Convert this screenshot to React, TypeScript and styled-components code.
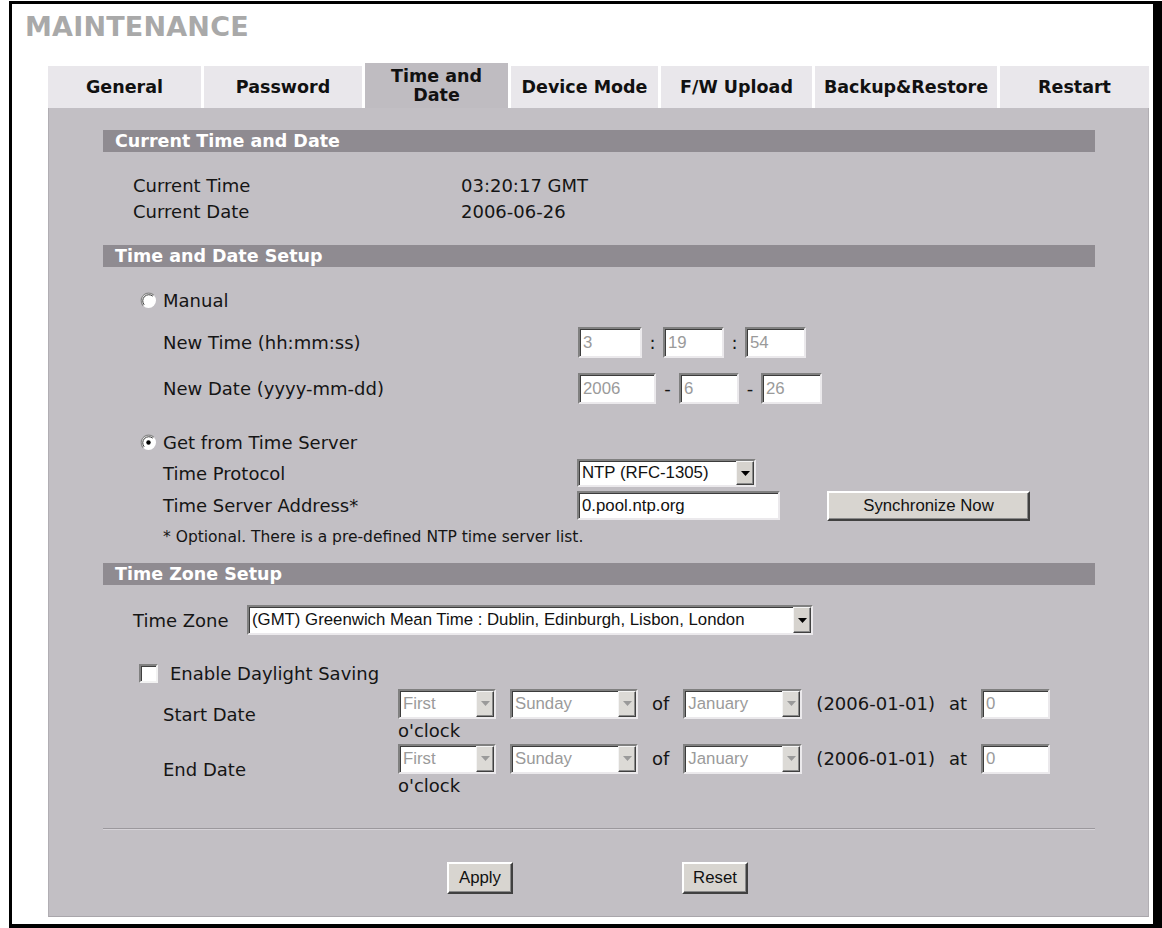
import React from "react";
import styled, { createGlobalStyle } from "styled-components";

const GlobalStyle = createGlobalStyle`
  html, body { margin: 0; padding: 0; background: #ffffff; }
  body {
    font-family: "DejaVu Sans", Verdana, sans-serif;
    font-size: 18px;
    color: #151515;
  }
  * { box-sizing: border-box; }
`;

const Frame = styled.div`
  margin: 1px 0 0 9px;
  width: 1153px;
  height: 927px;
  border: solid #000;
  border-width: 3px 9px 4px 3px;
  background: #fff;
  display: flex;
  flex-direction: column;
`;

const Title = styled.h1`
  margin: 0;
  padding: 7px 0 0 13px;
  font-size: 27px;
  line-height: 32px;
  font-weight: bold;
  color: #a9a9a9;
  letter-spacing: 0.2px;
`;

const TabBar = styled.div`
  display: flex;
  align-items: flex-end;
  gap: 3px;
  margin: 20px 0 0 36px;
  height: 45px;
`;

const Tab = styled.div<{ $w: number; $active?: boolean }>`
  width: ${(p) => p.$w}px;
  height: ${(p) => (p.$active ? 45 : 42)}px;
  display: flex;
  align-items: center;
  justify-content: center;
  text-align: center;
  font-weight: bold;
  font-size: 17.5px;
  line-height: 19px;
  color: #111;
  background: ${(p) => (p.$active ? "#bfbcc1" : "#e9e7eb")};
`;

const Panel = styled.div`
  margin-left: 36px;
  width: 1101px;
  height: 809px;
  background: #c2bfc4;
  border-left: 1px solid #b1aeb3;
  border-right: 1px solid #b1aeb3;
  border-bottom: 1px solid #a9a6ab;
  padding: 0 53px 0 54px;
  display: flex;
  flex-direction: column;
`;

const SectionHeader = styled.div<{ $mt: number }>`
  margin-top: ${(p) => p.$mt}px;
  height: 22px;
  background: #8f8b91;
  color: #fff;
  font-weight: bold;
  font-size: 17.5px;
  line-height: 22px;
  padding-left: 12px;
`;

const Row = styled.div<{ $mt?: number; $h: number; $indent: number }>`
  margin-top: ${(p) => p.$mt ?? 0}px;
  height: ${(p) => p.$h}px;
  padding-left: ${(p) => p.$indent}px;
  display: flex;
  align-items: center;
  white-space: nowrap;
`;

const Label = styled.span<{ $w: number }>`
  width: ${(p) => p.$w}px;
  flex: none;
`;

const Note = styled.span`
  font-size: 15.5px;
`;

const Field = styled.div<{ $w: number; $h?: number; $muted?: boolean }>`
  width: ${(p) => p.$w}px;
  height: ${(p) => p.$h ?? 30}px;
  flex: none;
  display: flex;
  align-items: center;
  background: #fff;
  border-style: solid;
  border-width: 2px;
  border-color: #808080 #ebe9ec #ebe9ec #808080;
  box-shadow: inset 1px 1px 0 #3c3c3c;
  padding-left: 3px;
  font-family: "Liberation Sans", Arial, sans-serif;
  font-size: 16.8px;
  color: ${(p) => (p.$muted ? "#9a9a9a" : "#111")};
  overflow: hidden;
`;

const SelectBox = styled(Field)`
  padding-right: 0;
`;

const SelectText = styled.span`
  flex: 1;
  overflow: hidden;
  white-space: nowrap;
`;

const ArrowButton = styled.span<{ $muted?: boolean }>`
  flex: none;
  width: 18px;
  height: 100%;
  display: flex;
  align-items: center;
  justify-content: center;
  background: ${(p) => (p.$muted ? "#dcdad6" : "#d6d3ce")};
  border-style: solid;
  border-width: 1px;
  border-color: #f4f4f4 #404040 #404040 #f4f4f4;
  box-shadow: inset -1px -1px 0 #8a8a8a;
`;

const Sep = styled.span<{ $w: number }>`
  width: ${(p) => p.$w}px;
  flex: none;
  text-align: center;
`;

const Button3D = styled.button<{ $w: number; $h?: number }>`
  width: ${(p) => p.$w}px;
  height: ${(p) => p.$h ?? 30}px;
  flex: none;
  padding: 0;
  background: #d8d5d0;
  border-style: solid;
  border-width: 2px;
  border-color: #ffffff #404040 #404040 #ffffff;
  box-shadow: inset -1px -1px 0 #8a8a8a;
  font-family: "Liberation Sans", Arial, sans-serif;
  font-size: 16.8px;
  color: #111;
`;

const CheckBox = styled.span`
  width: 19px;
  height: 19px;
  flex: none;
  margin-right: 12px;
  background: #fff;
  border-style: solid;
  border-width: 2px;
  border-color: #808080 #f2f2f2 #f2f2f2 #808080;
  box-shadow: inset 1px 1px 0 #404040;
`;

const RadioWrap = styled.span`
  width: 17px;
  height: 17px;
  flex: none;
  margin-right: 6px;
  display: inline-flex;
`;

const DstRow = styled.div<{ $mt?: number }>`
  margin-top: ${(p) => p.$mt ?? 0}px;
  height: 55px;
  padding-left: 60px;
  display: flex;
  align-items: center;
`;

const DstControls = styled.div`
  flex: 1;
  align-self: flex-start;
  display: flex;
  flex-wrap: wrap;
  align-items: center;
  column-gap: 14px;
  row-gap: 0;
`;

const DstWord = styled.span<{ $line?: boolean }>`
  white-space: nowrap;
  line-height: ${(p) => (p.$line ? "22px" : "33px")};
`;

const Divider = styled.div<{ $mt: number }>`
  margin-top: ${(p) => p.$mt}px;
  height: 2px;
  border-top: 1px solid #9b989d;
  border-bottom: 1px solid #d6d3d8;
`;

const ButtonRow = styled.div<{ $mt: number }>`
  margin-top: ${(p) => p.$mt}px;
  padding-left: 344px;
  display: flex;
  gap: 169px;
`;

const Arrow = ({ muted }: { muted?: boolean }) => (
  <ArrowButton $muted={muted}>
    <svg width="9" height="5" viewBox="0 0 9 5">
      <path d="M0 0 H9 L4.5 5 Z" fill={muted ? "#9a9a9a" : "#000"} />
    </svg>
  </ArrowButton>
);

const Select = ({
  w,
  h,
  value,
  muted,
}: {
  w: number;
  h?: number;
  value: string;
  muted?: boolean;
}) => (
  <SelectBox $w={w} $h={h} $muted={muted}>
    <SelectText>{value}</SelectText>
    <Arrow muted={muted} />
  </SelectBox>
);

const Radio = ({ checked }: { checked?: boolean }) => (
  <RadioWrap>
    <svg width="17" height="17" viewBox="0 0 17 17">
      <circle cx="8.5" cy="8.5" r="7.5" fill="#fff" />
      <path
        d="M3.2 13.8 A7.5 7.5 0 0 1 13.8 3.2"
        fill="none"
        stroke="#8a8a8a"
        strokeWidth="1.2"
      />
      <path
        d="M4.2 12.8 A6.1 6.1 0 0 1 12.8 4.2"
        fill="none"
        stroke="#3a3a3a"
        strokeWidth="1"
      />
      {checked && <circle cx="8.5" cy="8.5" r="2.2" fill="#000" />}
    </svg>
  </RadioWrap>
);

const tabs = [
  { label: "General", w: 153 },
  { label: "Password", w: 158 },
  { label: "Time and Date", w: 143, active: true },
  { label: "Device Mode", w: 147 },
  { label: "F/W Upload", w: 151 },
  { label: "Backup&Restore", w: 182 },
  { label: "Restart", w: 149 },
];

const DstLine = ({ label, mt }: { label: string; mt?: number }) => (
  <DstRow $mt={mt}>
    <Label $w={235}>{label}</Label>
    <DstControls>
      <Select w={98} h={30} value="First" muted />
      <Select w={128} h={30} value="Sunday" muted />
      <DstWord>of</DstWord>
      <Select w={119} h={30} value="January" muted />
      <DstWord>(2006-01-01)</DstWord>
      <DstWord>at</DstWord>
      <Field $w={69} $h={30} $muted>
        0
      </Field>
      <DstWord $line>o'clock</DstWord>
    </DstControls>
  </DstRow>
);

export default function App() {
  return (
    <>
      <GlobalStyle />
      <Frame>
        <Title>MAINTENANCE</Title>
        <TabBar>
          {tabs.map((t) => (
            <Tab key={t.label} $w={t.w} $active={t.active}>
              {t.active ? (
                <span>
                  Time and
                  <br />
                  Date
                </span>
              ) : (
                t.label
              )}
            </Tab>
          ))}
        </TabBar>
        <Panel>
          <SectionHeader $mt={22}>Current Time and Date</SectionHeader>
          <Row $mt={20} $h={26} $indent={30}>
            <Label $w={328}>Current Time</Label>
            <span>03:20:17 GMT</span>
          </Row>
          <Row $h={26} $indent={30}>
            <Label $w={328}>Current Date</Label>
            <span>2006-06-26</span>
          </Row>

          <SectionHeader $mt={21}>Time and Date Setup</SectionHeader>
          <Row $mt={20} $h={26} $indent={37}>
            <Radio />
            <span>Manual</span>
          </Row>
          <Row $mt={14} $h={31} $indent={60}>
            <Label $w={415}>New Time (hh:mm:ss)</Label>
            <Field $w={64} $h={31} $muted>
              3
            </Field>
            <Sep $w={21}>:</Sep>
            <Field $w={61} $h={31} $muted>
              19
            </Field>
            <Sep $w={21}>:</Sep>
            <Field $w={61} $h={31} $muted>
              54
            </Field>
          </Row>
          <Row $mt={15} $h={31} $indent={60}>
            <Label $w={415}>New Date (yyyy-mm-dd)</Label>
            <Field $w={78} $h={31} $muted>
              2006
            </Field>
            <Sep $w={23}>-</Sep>
            <Field $w={60} $h={31} $muted>
              6
            </Field>
            <Sep $w={22}>-</Sep>
            <Field $w={61} $h={31} $muted>
              26
            </Field>
          </Row>
          <Row $mt={25} $h={26} $indent={37}>
            <Radio checked />
            <span>Get from Time Server</span>
          </Row>
          <Row $mt={4} $h={28} $indent={60}>
            <Label $w={414}>Time Protocol</Label>
            <Select w={179} h={28} value="NTP (RFC-1305)" />
          </Row>
          <Row $mt={4} $h={29} $indent={60}>
            <Label $w={414}>Time Server Address*</Label>
            <Field $w={203} $h={29}>
              0.pool.ntp.org
            </Field>
            <Sep $w={47} />
            <Button3D $w={203}>Synchronize Now</Button3D>
          </Row>
          <Row $mt={7} $h={20} $indent={60}>
            <Note>* Optional. There is a pre-defined NTP time server list.</Note>
          </Row>

          <SectionHeader $mt={16}>Time Zone Setup</SectionHeader>
          <Row $mt={20} $h={30} $indent={30}>
            <Label $w={114}>Time Zone</Label>
            <Select
              w={566}
              h={30}
              value="(GMT) Greenwich Mean Time : Dublin, Edinburgh, Lisbon, London"
            />
          </Row>
          <Row $mt={27} $h={22} $indent={36}>
            <CheckBox />
            <span>Enable Daylight Saving</span>
          </Row>
          <DstLine label="Start Date" mt={3} />
          <DstLine label="End Date" />
          <Divider $mt={31} />
          <ButtonRow $mt={32}>
            <Button3D $w={66} $h={32}>
              Apply
            </Button3D>
            <Button3D $w={66} $h={32}>
              Reset
            </Button3D>
          </ButtonRow>
        </Panel>
      </Frame>
    </>
  );
}
